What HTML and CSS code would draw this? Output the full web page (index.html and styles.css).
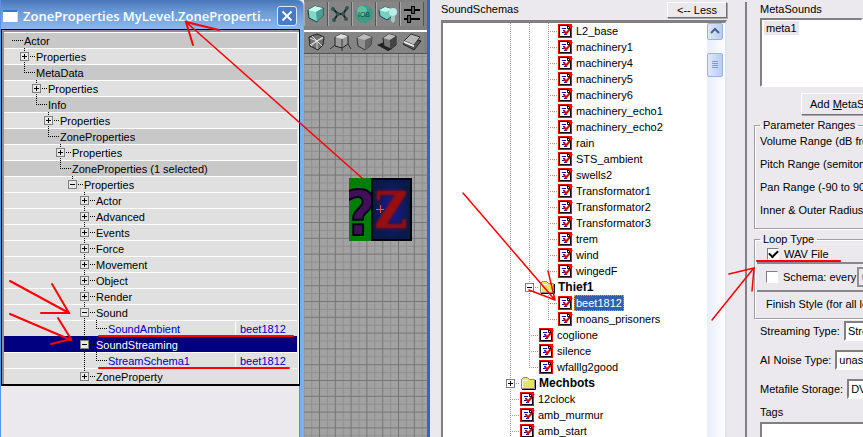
FILE: index.html
```html
<!DOCTYPE html>
<html lang="en">
<head>
<meta charset="utf-8">
<title>Zone sound setup</title>
<link rel="stylesheet" href="styles.css">
</head>
<body>
<svg class="defs" aria-hidden="true">
  <symbol id="doc" viewBox="0 0 15 16">
    <rect x="0" y="1" width="14" height="14" fill="#f00"/>
    <path d="M1.500 2.500H9.500L12.500 5.500V13.500H1.500Z" fill="#fff" stroke="#000"/>
    <path d="M9.500 2.500V5.500H12.500" fill="none" stroke="#000"/>
    <path d="M4 5.500H8M5 7.500H7M4 9.500H7M6 11.500H9" stroke="#00a" fill="none"/>
    <path d="M6 7.500L8 10.500L11.500 6.500" fill="none" stroke="#e00000" stroke-width="2"/>
    <path d="M10 8L14.500 3.500" fill="none" stroke="#d00000"/>
  </symbol>
  <symbol id="folder" viewBox="0 0 17 16">
    <path d="M1.500 13.500V4.500L3.500 2.500H7.500L9.500 4.500H14.500V13.500Z" fill="#e8e468" stroke="#888"/>
    <path d="M2.500 12.500V5.500H8" fill="none" stroke="#fff"/>
    <path d="M15.500 5V14.500H2" fill="none" stroke="#000"/>
  </symbol>
</svg>

<main class="desktop">
  <section class="props-window">
    <header class="titlebar">
      <span class="app-icon"></span>
      <h1>ZoneProperties MyLevel.ZoneProperti...</h1>
      <button class="close" aria-label="Close"><svg viewBox="0 0 20 20"><path d="M5 5L15 15M15 5L5 15" stroke="#fff" stroke-width="2"/></svg></button>
    </header>
    <ul class="props">
      <li class="cat l0"><i class="twig dash"></i>Actor</li>
      <li class="l1"><i class="twig tee"><button class="box plus" aria-label="Expand"></button></i>Properties</li>
      <li class="cat l1"><i class="twig ell"></i>MetaData</li>
      <li class="l2"><i class="twig tee"><button class="box plus" aria-label="Expand"></button></i>Properties</li>
      <li class="cat l2"><i class="twig ell"></i>Info</li>
      <li class="l3"><i class="twig tee"><button class="box plus" aria-label="Expand"></button></i>Properties</li>
      <li class="cat l3"><i class="twig ell"></i>ZoneProperties</li>
      <li class="l4"><i class="twig tee"><button class="box plus" aria-label="Expand"></button></i>Properties</li>
      <li class="cat l4"><i class="twig ell"></i>ZoneProperties (1 selected)</li>
      <li class="l5"><i class="twig ell"><button class="box" aria-label="Collapse"></button></i>Properties</li>
      <li class="l6"><i class="twig tee"><button class="box plus" aria-label="Expand"></button></i>Actor</li>
      <li class="l6"><i class="twig tee"><button class="box plus" aria-label="Expand"></button></i>Advanced</li>
      <li class="l6"><i class="twig tee"><button class="box plus" aria-label="Expand"></button></i>Events</li>
      <li class="l6"><i class="twig tee"><button class="box plus" aria-label="Expand"></button></i>Force</li>
      <li class="l6"><i class="twig tee"><button class="box plus" aria-label="Expand"></button></i>Movement</li>
      <li class="l6"><i class="twig tee"><button class="box plus" aria-label="Expand"></button></i>Object</li>
      <li class="l6"><i class="twig tee"><button class="box plus" aria-label="Expand"></button></i>Render</li>
      <li class="l6"><i class="twig tee"><button class="box" aria-label="Collapse"></button></i>Sound</li>
      <li class="l6 leaf"><i class="guide"></i><i class="twig ell"></i>SoundAmbient<span class="value">beet1812</span></li>
      <li class="l6 current"><i class="twig tee"><button class="box" aria-label="Collapse"></button></i>SoundStreaming</li>
      <li class="l6 leaf"><i class="guide"></i><i class="twig ell"></i>StreamSchema1<span class="value">beet1812</span></li>
      <li class="l6"><i class="twig ell"><button class="box plus" aria-label="Expand"></button></i>ZoneProperty</li>
    </ul>
  </section>

  <section class="viewport">
    <nav class="tools top-tools">
      <button aria-label="Cube"><svg viewBox="0 0 22 24"><path d="M3 8L10 4L18 6V14L12 20L4 16Z" fill="#7fd8c8" stroke="#123c38"/><path d="M3 8L11 10L18 6L10 4Z" fill="#c4fff0"/><path d="M11 10L18 6V14L12 20Z" fill="#4c9c90"/></svg></button>
      <button aria-label="Path"><svg viewBox="0 0 22 24"><path d="M4 7L9 12L14 12L18 6M9 12L5 18M14 12L17 17" fill="none" stroke="#1c2422" stroke-width="2"/><g fill="#2f5850"><circle cx="4" cy="7" r="2"/><circle cx="9" cy="12" r="2"/><circle cx="14" cy="12" r="2"/><circle cx="18" cy="6" r="2"/><circle cx="5" cy="18" r="2"/><circle cx="17" cy="17" r="2"/></g></svg></button>
      <button aria-label="Sphere"><svg viewBox="0 0 22 24"><circle cx="11" cy="12" r="9" fill="#3c9c84"/><circle cx="9" cy="9" r="5" fill="#62bea6"/><text x="11" y="15" text-anchor="middle" class="sphere-text">IOB</text></svg></button>
      <button aria-label="Light"><svg viewBox="0 0 22 24"><path d="M2 8L8 5L15 7V14L10 18L3 14Z" fill="#79d0c0" stroke="#1c4844"/><path d="M2 8L9 10L15 7L8 5Z" fill="#c4fff0"/><circle cx="16" cy="10" r="4" fill="#b8eee8"/><path d="M14 14H18V19L16 21L14 19Z" fill="#a0c8c4"/></svg></button>
      <button aria-label="Settings"><svg viewBox="0 0 22 24"><path d="M3 8H19M3 17H19" stroke="#000" stroke-width="2"/><rect x="10.500" y="4.500" width="3" height="7" fill="#555" stroke="#000"/><rect x="6.500" y="13.500" width="3" height="7" fill="#555" stroke="#000"/></svg></button>
    </nav>
    <nav class="tools">
      <button aria-label="Wireframe"><svg viewBox="0 0 24 20"><path d="M5 5L13 2L20 5L19 13L14 18L6 14Z" fill="#707070" stroke="#222"/><path d="M6 6L13 9L19 6M13 9V17M6 13L19 5M8 4L18 14M7 14L13 9" fill="none" stroke="#ddd"/></svg></button>
      <button aria-label="Corner"><svg viewBox="0 0 24 20"><path d="M7 5L13 2L20 4V12L14 16L7 14Z" fill="#999" stroke="#222"/><path d="M7 5L14 7L20 4L13 2Z" fill="#ddd"/><path d="M14 7V16M7 13L2 17M14 16V19M20 12L23 17" stroke="#333"/></svg></button>
      <button aria-label="Textured cube"><svg viewBox="0 0 24 20"><path d="M5 6L12 2L20 5L19 13L13 18L6 14Z" fill="#8e8e8e" stroke="#333"/><path d="M5 6L13 8L20 5L12 2Z" fill="#bbb"/><path d="M13 8V18L19 13L20 5Z" fill="#666"/></svg></button>
      <button aria-label="Shadowed cube"><svg viewBox="0 0 24 20"><path d="M1 13L8 10L16 17L12 19Z" fill="#222"/><path d="M7 6L13 2L20 4V13L15 17L8 14Z" fill="#777" stroke="#222"/><path d="M7 6L14 8L20 4L13 2Z" fill="#bbb"/><path d="M14 8V17L20 13V4Z" fill="#444"/></svg></button>
      <button aria-label="Surface"><svg viewBox="0 0 24 20"><path d="M3 12L11 6L21 9L14 18Z" fill="#555" stroke="#222"/><path d="M4 9L11 2L20 5L14 13Z" fill="#b5b5b5" stroke="#333"/><path d="M4 9L14 13V15L4 11Z" fill="#eee"/></svg></button>
    </nav>
    <svg class="scene" viewBox="304 54 123 383" preserveAspectRatio="xMinYMin slice">
      <defs>
        <pattern id="grid" x="319" y="64" width="15.800" height="15.800" patternUnits="userSpaceOnUse">
          <rect width="16" height="16" fill="#a2a2a2"/>
          <path d="M8.500 0V16M0 8.500H16" stroke="#8f8f8f"/>
          <path d="M.500 0V16M0 .500H16" stroke="#767676"/>
        </pattern>
        <filter id="soft"><feGaussianBlur stdDeviation="0.900"/></filter>
        <clipPath id="left-half"><rect x="349" y="178" width="22" height="63"/></clipPath>
        <radialGradient id="navy"><stop offset="0" stop-color="#1a1a98"/><stop offset="1" stop-color="#0a1a48"/></radialGradient>
      </defs>
      <rect x="304" y="54" width="400" height="800" fill="url(#grid)"/>
      <rect x="349" y="178" width="22" height="63" fill="#007c08"/>
      <rect x="371" y="178" width="41" height="63" fill="#000"/>
      <rect x="373" y="180" width="37" height="59" fill="url(#navy)"/>
      <g clip-path="url(#left-half)"><text x="360" y="235" text-anchor="middle" class="sprite-mark">?</text></g>
      <text x="391" y="228" text-anchor="middle" class="sprite-z" filter="url(#soft)">Z</text>
      <path d="M376 209.500H384M380.500 205V213" stroke="#ff5050"/>
    </svg>
  </section>

  <section class="dialog">
    <div class="schemas">
      <div class="schemas-head"><span>SoundSchemas</span><button class="btn">&lt;-- Less</button></div>
      <div class="listbox">
        <ul class="tree">
          <li><i class="rail"></i><i class="rail"></i><i class="branch"></i><svg class="doc"><use href="#doc"/></svg><span>L2_base</span></li>
          <li><i class="rail"></i><i class="rail"></i><i class="branch"></i><svg class="doc"><use href="#doc"/></svg><span>machinery1</span></li>
          <li><i class="rail"></i><i class="rail"></i><i class="branch"></i><svg class="doc"><use href="#doc"/></svg><span>machinery4</span></li>
          <li><i class="rail"></i><i class="rail"></i><i class="branch"></i><svg class="doc"><use href="#doc"/></svg><span>machinery5</span></li>
          <li><i class="rail"></i><i class="rail"></i><i class="branch"></i><svg class="doc"><use href="#doc"/></svg><span>machinery6</span></li>
          <li><i class="rail"></i><i class="rail"></i><i class="branch"></i><svg class="doc"><use href="#doc"/></svg><span>machinery_echo1</span></li>
          <li><i class="rail"></i><i class="rail"></i><i class="branch"></i><svg class="doc"><use href="#doc"/></svg><span>machinery_echo2</span></li>
          <li><i class="rail"></i><i class="rail"></i><i class="branch"></i><svg class="doc"><use href="#doc"/></svg><span>rain</span></li>
          <li><i class="rail"></i><i class="rail"></i><i class="branch"></i><svg class="doc"><use href="#doc"/></svg><span>STS_ambient</span></li>
          <li><i class="rail"></i><i class="rail"></i><i class="branch"></i><svg class="doc"><use href="#doc"/></svg><span>swells2</span></li>
          <li><i class="rail"></i><i class="rail"></i><i class="branch"></i><svg class="doc"><use href="#doc"/></svg><span>Transformator1</span></li>
          <li><i class="rail"></i><i class="rail"></i><i class="branch"></i><svg class="doc"><use href="#doc"/></svg><span>Transformator2</span></li>
          <li><i class="rail"></i><i class="rail"></i><i class="branch"></i><svg class="doc"><use href="#doc"/></svg><span>Transformator3</span></li>
          <li><i class="rail"></i><i class="rail"></i><i class="branch"></i><svg class="doc"><use href="#doc"/></svg><span>trem</span></li>
          <li><i class="rail"></i><i class="rail"></i><i class="branch"></i><svg class="doc"><use href="#doc"/></svg><span>wind</span></li>
          <li><i class="rail"></i><i class="rail"></i><i class="branch end"></i><svg class="doc"><use href="#doc"/></svg><span>wingedF</span></li>
          <li><i class="rail"></i><i class="branch"><button class="box" aria-label="Collapse"></button></i><svg class="folder"><use href="#folder"/></svg><b>Thief1</b></li>
          <li><i class="rail"></i><i class="rail"></i><i class="branch"></i><svg class="doc"><use href="#doc"/></svg><span class="picked">beet1812</span></li>
          <li><i class="rail"></i><i class="rail"></i><i class="branch end"></i><svg class="doc"><use href="#doc"/></svg><span>moans_prisoners</span></li>
          <li><i class="rail"></i><i class="branch"></i><svg class="doc"><use href="#doc"/></svg><span>coglione</span></li>
          <li><i class="rail"></i><i class="branch"></i><svg class="doc"><use href="#doc"/></svg><span>silence</span></li>
          <li><i class="rail"></i><i class="branch end"></i><svg class="doc"><use href="#doc"/></svg><span>wfalllg2good</span></li>
          <li><i class="branch"><button class="box plus" aria-label="Expand"></button></i><svg class="folder"><use href="#folder"/></svg><b>Mechbots</b></li>
          <li><i class="branch"></i><svg class="doc"><use href="#doc"/></svg><span>12clock</span></li>
          <li><i class="branch"></i><svg class="doc"><use href="#doc"/></svg><span>amb_murmur</span></li>
          <li><i class="branch"></i><svg class="doc"><use href="#doc"/></svg><span>amb_start</span></li>
        </ul>
        <div class="scroll">
          <button class="scroll-up" aria-label="Scroll up"><svg viewBox="0 0 14 15"><path d="M3 9L7 5L11 9" fill="none" stroke="#4a6184" stroke-width="2"/></svg></button>
          <button class="thumb" aria-label="Scroll position"><svg viewBox="0 0 14 22"><path d="M4 7.500H10M4 9.500H10M4 11.500H10M4 13.500H10" stroke="#7f9cc8"/></svg></button>
        </div>
      </div>
    </div>

    <form class="settings">
      <div class="caption" id="meta-label">MetaSounds</div>
      <div class="metabox" role="listbox" aria-labelledby="meta-label"><span>meta1</span></div>
      <button type="button" class="btn add">Add <u>M</u>etaS</button>
      <fieldset class="ranges">
        <legend>Parameter Ranges</legend>
        <p>Volume Range (dB fro</p>
        <p>Pitch Range (semitone</p>
        <p>Pan Range (-90 to 90</p>
        <p>Inner &amp; Outer Radius (</p>
      </fieldset>
      <fieldset class="loop">
        <legend>Loop Type</legend>
        <label class="check"><input type="checkbox" checked>WAV File</label>
        <div class="schema"><label class="check"><input type="checkbox">Schema: every</label><input class="num" aria-label="Seconds" value="0" disabled></div>
        <p class="finish">Finish Style (for all loo</p>
      </fieldset>
      <div class="field"><label for="stream">Streaming Type:</label><select id="stream"><option>Stre</option></select></div>
      <div class="field"><label for="noise">AI Noise Type:</label><select id="noise"><option>unass</option></select></div>
      <div class="field"><label for="storage">Metafile Storage:</label><select id="storage"><option>DV</option></select></div>
      <label class="tags-label" for="tags">Tags</label>
      <textarea id="tags"></textarea>
    </form>
  </section>

  <svg class="marks" viewBox="0 0 863 437" preserveAspectRatio="xMinYMin meet" aria-hidden="true">
    <g fill="none" stroke="#f00" stroke-width="1.500" stroke-linecap="round">
      <path d="M362 178L186 22"/>
      <path d="M463 193L555 300M548 271L555 300M529 290L555 300"/>
      <path d="M712 320L753 269M729 274L754 268L752 291"/>
      <path d="M10 281L69 313M52 284L69 313H41M10 314L71 340M58 318L71 339L51 344" stroke-width="2"/>
      <path d="M219 30L186 22L193 45M99 336H293M99 368H289M757 261H840" stroke-width="2"/>
    </g>
  </svg>
</main>
</body>
</html>
```
FILE: styles.css
```css
* { box-sizing: border-box; }
body {
  margin: 0;
  font: 11px/16px "Liberation Sans", Arial, sans-serif;
  color: #000;
  background: #ebe9ed;
}
button, input, select, textarea { font: inherit; color: inherit; margin: 0; padding: 0; border-radius: 0; }
ul, p, h1, fieldset { margin: 0; padding: 0; list-style: none; }
.defs { position: absolute; width: 0; height: 0; }
.desktop {
  position: relative;
  display: grid;
  grid-template-columns: 304fr 126fr 433fr;
  height: 100vh;
  overflow: hidden;
  white-space: nowrap;
}
.desktop > * { min-width: 0; }

/* Property window */
.props-window {
  border-left: 1px solid #5b94e4;
  border-right: 4px solid #78b0f0;
  border-top-right-radius: 6px;
  background: #ebe9ed;
  box-shadow: inset -1px 0 #5d8cd0;
}
.titlebar {
  display: flex;
  align-items: center;
  gap: 5px;
  height: 29px;
  margin-right: -3px;
  padding: 2px 6px 0 2px;
  border-radius: 0 6px 0 0;
  background: linear-gradient(#4a76ba, #6c9ad6 12px, #8cb8ec);
  color: #fff;
}
.titlebar h1 { flex: 1; font: 600 13px/20px "Open Sans", sans-serif; }
.app-icon { width: 15px; height: 12px; background: #fff; border-top: 2px solid #2d7bd8; border-right: 1px solid #cfe0f5; }
.close { width: 20px; height: 20px; border: 1px solid #dce8f8; border-radius: 3px; background: #4a7ac6; display: grid; }
.props {
  border: 1px solid #000;
  border-bottom-width: 2px;
  background: #e0e0e0;
  padding: 2px 2px 0 2px;
  box-shadow: inset 2px 2px #909090, inset -1px 0 #fff;
}
.props li {
  display: flex;
  height: 16px;
  border-top: 1px solid #fff;
  line-height: 16px;
  background: #e0e0e0;
}
.props .cat { background: #c8c8c8; }
.l0 { padding-left: 4px; }
.l1 { padding-left: 16px; }
.l2 { padding-left: 28px; }
.l3 { padding-left: 40px; }
.l4 { padding-left: 52px; }
.l5 { padding-left: 64px; }
.l6 { padding-left: 76px; }
.twig, .guide {
  flex: none;
  width: 16px;
  height: 16px;
  margin-top: -1px;
  padding-top: 4px;
  background-image:
    repeating-linear-gradient(90deg, #000 0 1px, transparent 1px 2px),
    repeating-linear-gradient(#000 0 1px, transparent 1px 2px);
  background-repeat: no-repeat;
  background-position: 4px 8px, 4px 0;
}
.dash { background-size: 11px 1px, 0 0; }
.ell { background-size: 11px 1px, 1px 8px; }
.tee { background-size: 11px 1px, 1px 16px; }
.guide { width: 12px; background-size: 0 0, 1px 16px; }
.box {
  display: block;
  width: 9px;
  height: 9px;
  border: 1px solid #808080;
  background: linear-gradient(#000, #000) center / 5px 1px no-repeat, #e8e8e8;
}
.box.plus {
  background:
    linear-gradient(#000, #000) center / 5px 1px no-repeat,
    linear-gradient(#000, #000) center / 1px 5px no-repeat, #e8e8e8;
}
.props .leaf { color: #0000c8; }
.props .current { background: #000080; color: #fff; border-top-color: #000080; }
.value { width: 62px; margin-left: auto; padding-left: 4px; border-left: 1px solid #fff; }

/* 3D viewport */
.viewport {
  display: flex;
  flex-direction: column;
  background: #a2a2a2;
  border-right: 3px solid #2f68c4;
  overflow: hidden;
}
.tools { display: flex; height: 22px; background: #808080; border-bottom: 1px solid #555; }
.top-tools { height: 32px; padding-top: 2px; border-bottom: 2px solid #fff; }
.tools button { width: 24px; height: 20px; flex: none; border: 0; background: #858585; display: grid; }
.top-tools button { height: 24px; border-left: 1px solid #a8a8a8; border-right: 1px solid #555; }
.tools svg { width: 100%; height: 100%; }
.sphere-text { font: 7px "Liberation Sans", sans-serif; fill: #0c4438; }
.scene { display: block; width: 100%; flex: 1; min-height: 0; }
.sprite-mark { font: bold 62px "Liberation Sans Narrow", "DejaVu Sans Condensed", sans-serif; fill: #401058; stroke: #08001c; stroke-width: 2px; }
.sprite-z { font: bold 50px "DejaVu Serif Condensed", "DejaVu Serif", serif; fill: #9c0c10; stroke: #8c0c14; stroke-width: 1px; }

/* Sound dialog */
.dialog { display: grid; grid-template-columns: 317fr 116fr; overflow: hidden; }
.dialog > * { min-width: 0; }
.schemas {
  display: flex;
  flex-direction: column;
  margin-top: 2px;
  padding: 0 18px 0 11px;
  border-right: 2px solid #808088;
  min-height: 0;
}
.schemas-head { display: flex; justify-content: space-between; height: 18px; line-height: 14px; }
.btn {
  width: 60px;
  height: 16px;
  line-height: 14px;
  border: 1px solid;
  border-color: #fff #707070 #707070 #fff;
  box-shadow: 1px 1px #a8a8a8;
  background: #ebe9ed;
}
.listbox {
  display: flex;
  flex: 1;
  border: solid #808080;
  border-width: 3px 2px 0 2px;
  border-right-color: #e0e6f0;
  background: #fff;
  overflow: hidden;
}
.tree { flex: 1; padding-left: 63px; }
.tree li { display: flex; height: 16px; }
.tree .box { background-color: #fff; }
.rail, .branch {
  flex: none;
  width: 19px;
  height: 16px;
  padding-top: 4px;
  background-image:
    repeating-linear-gradient(#999 0 1px, transparent 1px 2px),
    repeating-linear-gradient(90deg, #999 0 1px, transparent 1px 2px);
  background-repeat: no-repeat;
  background-position: 4px 0, 4px 8px;
  background-size: 1px 16px, 0 0;
}
.branch { width: 14px; background-size: 1px 16px, 9px 1px; }
.end { background-size: 1px 8px, 9px 1px; }
.doc { flex: none; width: 15px; height: 16px; }
.folder { flex: none; width: 17px; height: 16px; }
.tree span { padding: 0 2px; margin-left: 1px; }
.tree b { font-size: 12px; padding-left: 2px; }
.tree .picked { background: #2f5fae; color: #fff; outline: 1px dotted #d8a048; outline-offset: -1px; }
.scroll { width: 18px; background: linear-gradient(90deg, #e8eefb, #fdfdff); }
.scroll button { display: grid; width: 16px; border: 1px solid #98b4e0; border-radius: 2px; background: linear-gradient(90deg, #dce8fc, #b8ccf4); }
.scroll-up { height: 17px; }
.scroll .thumb { height: 24px; margin-top: 13px; }

/* Settings column */
.settings { padding: 0 0 0 7px; overflow: hidden; }
.caption { padding: 1px 0 0 6px; }
.metabox { height: 69px; margin: 1px 0 0 6px; padding: 1px 2px; border: 2px solid; border-color: #808080 #fff #fff #808080; background: #fff; line-height: 14px; }
.metabox span { display: inline-block; padding: 0 2px; background: #e8e6ec; }
.btn.add { display: block; width: auto; height: 22px; margin: 6px 0 0 47px; padding: 0 0 0 8px; min-width: 100px; text-align: left; line-height: 20px; }
fieldset { border: 1px solid #a0a0a4; box-shadow: inset 1px 1px #fff, 1px 1px #fff; min-width: 0; border-right: 0; }
legend { margin-left: 5px; padding: 0 3px; line-height: 16px; }
.ranges { margin-top: 2px; height: 112px; }
.ranges p { padding-left: 5px; height: 23px; }
.loop { height: 88px; margin-top: 2px; }
.check { display: flex; align-items: center; gap: 5px; }
.loop > .check { height: 14px; padding-left: 12px; }
.check input {
  appearance: none;
  width: 12px;
  height: 12px;
  border: 1px solid;
  border-color: #808080 #fff #fff #808080;
  background: #fff;
}
.check input:checked::after {
  content: "";
  display: block;
  width: 7px;
  height: 4px;
  margin: 1px 0 0 1px;
  border: solid #000;
  border-width: 0 0 2px 2px;
  transform: rotate(-45deg);
}
.schema { display: flex; align-items: center; gap: 1px; height: 30px; margin: 1px 0 0 2px; padding-left: 9px; border: solid #88888c; border-width: 2px 0; }
.num { width: 40px; height: 20px; flex: none; padding-left: 2px; border: 2px solid #909090; background: #ebe9ed; color: #909090; }
.finish { padding: 4px 0 0 11px; }
.field { display: flex; align-items: center; gap: 4px; height: 20px; margin: 2px 0 9px 6px; }
.field select { appearance: none; flex: none; width: 100px; height: 20px; padding-left: 2px; border: 2px solid; border-color: #808080 #fff #fff #808080; background: #fff; }
.tags-label { display: block; margin: -4px 0 0 6px; }
textarea { display: block; width: 100%; height: 60px; margin: 2px 0 0 6px; border: 2px solid; border-color: #808080 #fff #fff #808080; background: #fff; resize: none; }

/* Hand-drawn arrows over the windows */
.marks { position: absolute; top: 0; left: 0; width: 100%; pointer-events: none; }
```
